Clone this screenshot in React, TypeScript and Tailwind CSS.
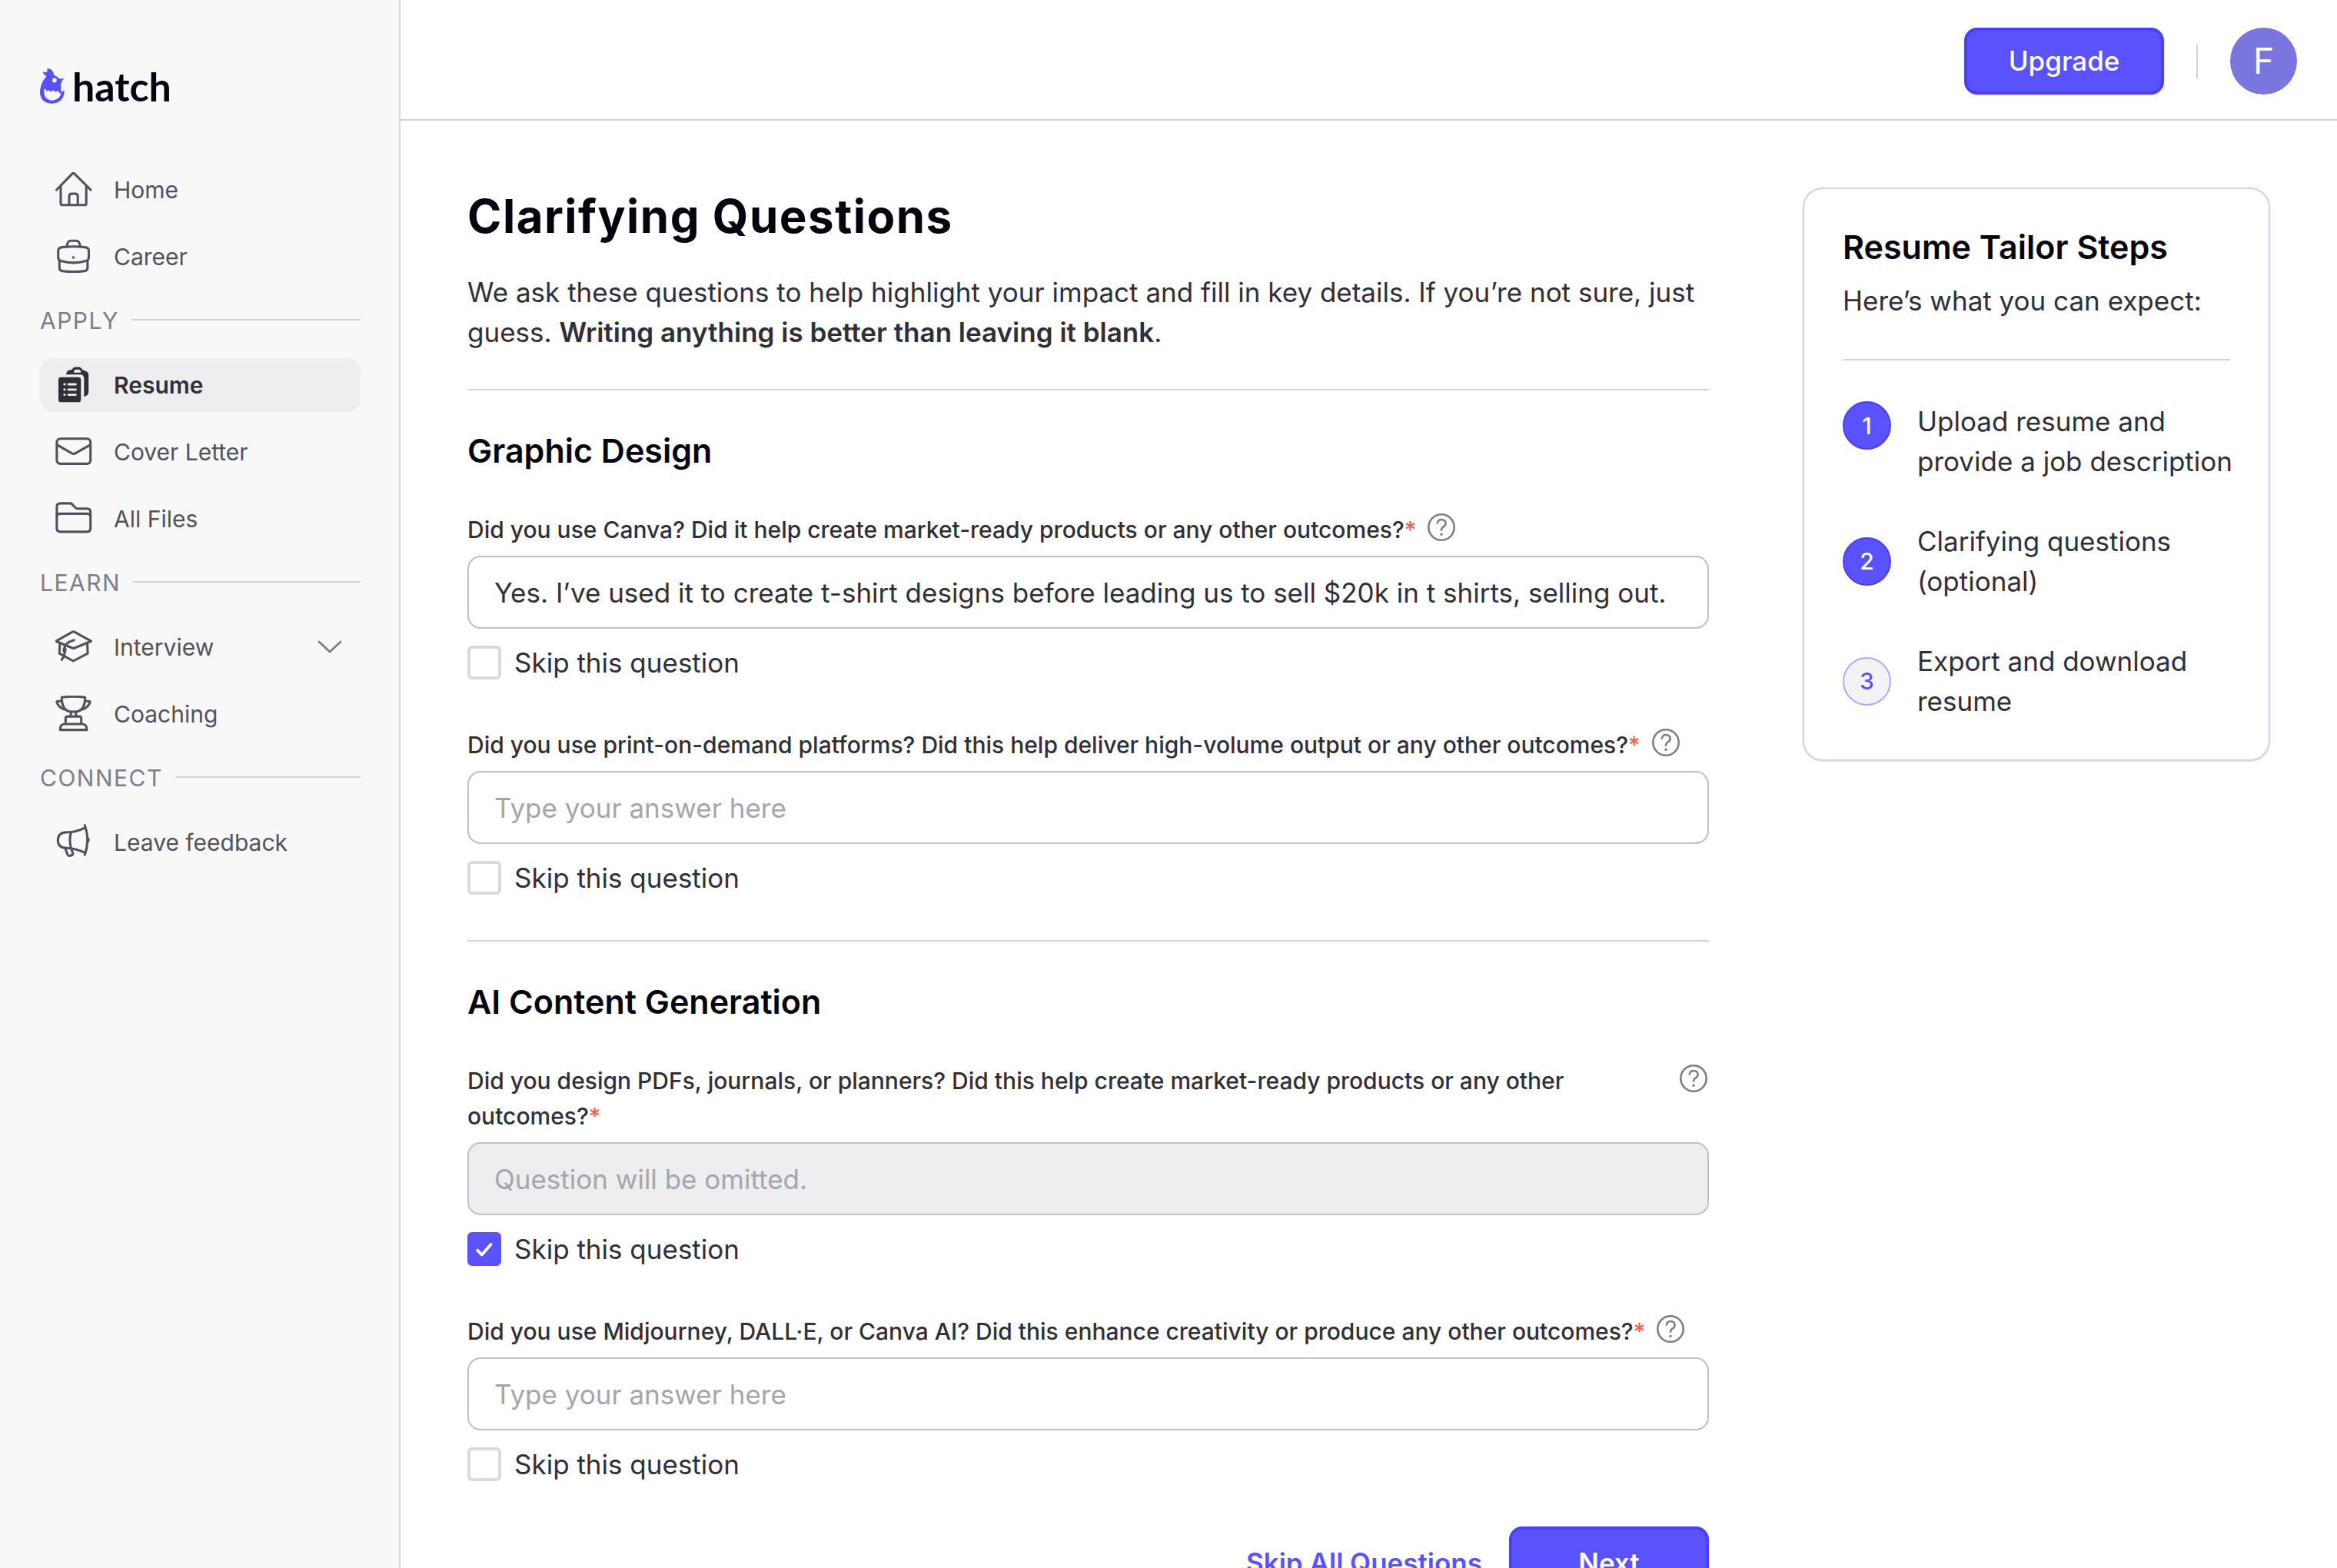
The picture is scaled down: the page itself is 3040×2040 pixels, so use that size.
import { useState, type ReactNode } from "react";

const NEXT_STEPS = [
  { label: "Upload resume and provide a job description", reached: true },
  { label: "Clarifying questions (optional)", reached: true },
  { label: "Export and download resume", reached: false },
];

type Question = {
  id: string;
  text: string;
  answer?: string;
  skipped?: boolean;
};

type Topic = {
  title: string;
  questions: Question[];
};

const TOPICS: Topic[] = [
  {
    title: "Graphic Design",
    questions: [
      {
        id: "canva",
        text: "Did you use Canva? Did it help create market-ready products or any other outcomes?",
        answer:
          "Yes. I’ve used it to create t-shirt designs before leading us to sell $20k in t shirts, selling out.",
      },
      {
        id: "print-on-demand",
        text: "Did you use print-on-demand platforms? Did this help deliver high-volume output or any other outcomes?",
      },
    ],
  },
  {
    title: "AI Content Generation",
    questions: [
      {
        id: "pdfs",
        text: "Did you design PDFs, journals, or planners? Did this help create market-ready products or any other outcomes?",
        skipped: true,
      },
      {
        id: "midjourney",
        text: "Did you use Midjourney, DALL·E, or Canva AI? Did this enhance creativity or produce any other outcomes?",
      },
    ],
  },
];

function Icon({ children }: { children: ReactNode }) {
  return (
    <svg
      viewBox="0 0 48 48"
      fill="none"
      stroke="currentColor"
      strokeWidth="3.1"
      strokeLinecap="round"
      strokeLinejoin="round"
      aria-hidden="true"
      className="h-12 w-12 shrink-0"
    >
      {children}
    </svg>
  );
}

const HomeIcon = () => (
  <Icon>
    <path d="M1.6 24 21.6 3.4q1.8-1.8 3.6 0L46 24" />
    <path d="M7 19v22.4q0 2.3 2.3 2.3h28.6q2.3 0 2.3-2.3V19" />
    <path d="M18 43.500V32.500q0-3.500 3.500-3.500h4.200q3.500 0 3.500 3.500v11" />
  </Icon>
);

const CareerIcon = () => (
  <Icon>
    <path d="M15.300 11V8.500Q16.200 3.200 20 3.200h7.200q3.800 0 4.800 5.300V11" />
    <path d="M8.500 11.600q15-1.700 30.300 0 4.700.6 4.700 5v8.200q0 3.700-3.700 4.700-16.200 4.800-32.400 0-3.700-1-3.700-4.700v-8.200q0-4.400 4.800-5Z" />
    <path d="M5.300 29v9.300q0 3.700 3.900 4.300 14.400 1.900 28.800 0 3.900-.6 3.900-4.300V29" />
    <circle cx="23.500" cy="25" r="1.700" fill="currentColor" stroke="none" />
  </Icon>
);

const ResumeIcon = () => (
  <Icon>
    <rect x="4" y="13.700" width="29.300" height="32.600" rx="3.400" fill="currentColor" stroke="none" />
    <path
      d="M14 10.200q.6-5.500 5.600-6h1.900Q23.200.6 26 .6h4.600q2.800 0 4.500 3.500L39.800 6q3.400 1.400 3.400 5v22q0 3-2.300 4.400l-3.600 1.900V15.500q0-5.300-5.300-5.300Z"
      fill="currentColor"
      stroke="none"
    />
    <path d="M24.300 6.900q.3-2.600 2.300-2.600h4q2 0 2.300 2.600Z" className="fill-[#eeeef0] stroke-[#eeeef0]" strokeWidth="1" />
    <g className="stroke-[#eeeef0]" strokeWidth="2.800">
      <path d="M11.700 23h.6M17 23h9.500M11.700 29.800h.6M17 29.800h9.500M11.700 36.600h.6M17 36.600h9.500" />
    </g>
  </Icon>
);

const MailIcon = () => (
  <Icon>
    <rect x="1.900" y="6.800" width="43.800" height="32.600" rx="4.600" />
    <path d="m2.500 14.800 19.600 11.300q1.600.9 3.200 0L45.200 14.800" />
  </Icon>
);

const FolderIcon = () => (
  <Icon>
    <path d="M1.900 36.300V8.500q0-4.600 4.600-4.600h12.800q1.400 0 2.400 1l4.600 4.900q.9 1 2.300 1h12.500q4.600 0 4.600 4.600v20.900q0 4.600-4.600 4.600H6.500q-4.600 0-4.600-4.600Z" />
    <path d="M1.900 20.500q.6-3.100 4-3.100h35.800q3.400 0 4 3.100" />
  </Icon>
);

const InterviewIcon = () => (
  <Icon>
    <path d="m.9 16.200 21.300-12q1.300-.7 2.600 0l21.700 12-22 9q-1 .4-2 0Z" />
    <path d="M5.800 20.500 5.300 32.200l18 9.800 18.800-9.800-.5-12" />
    <path d="M24.300 14.800Q12 18.500 12 25.500q1.300 9-3.700 14.800" />
    <ellipse cx="12" cy="27.700" rx="2.600" ry="3.600" fill="currentColor" stroke="none" />
  </Icon>
);

const CoachingIcon = () => (
  <Icon>
    <path d="M8.300 2.300q15.200-2 30.400 0 0 17.900-12.300 18.700h-5.800Q8.300 20.200 8.300 2.300Z" />
    <path d="M8.500 7.300H4.300Q1.800 7.300 1.800 8.500q3 8.500 12 9.800M38.500 7.300h4.200q2.500 0 2.500 1.200-3 8.500-12 9.800" />
    <path d="m20.600 21-.8 5.500M26.400 21l.8 5.500M13.300 36.500v-6.800q0-2.600 2.600-2.600h15.200q2.600 0 2.600 2.600v6.800" />
    <path d="M6.300 44.600q-.3-7.600 5.700-7.600h23q6 0 5.800 7.600Z" />
  </Icon>
);

const FeedbackIcon = () => (
  <Icon>
    <path d="M38.700 4.800Q26 11 15 10.700 3.300 11 3.300 21T14 31.300q12 .2 24.700 6.400" />
    <path d="M20.300 11q-2.600 9.500 0 20.500M38.300 1.700q7 19 0 38.500" />
    <path d="M42.500 17.800q3 3 0 6" fill="currentColor" strokeWidth="1.500" />
    <path d="m12.700 31.500 3.200 8.300q.8 2.200 3 1.600l2-.6q2.200-.7 1.700-2.800l-2-6.500" />
  </Icon>
);

function Logo() {
  return (
    <a href="#" aria-label="hatch" className="flex h-12 items-center gap-[10px]">
      <svg viewBox="24 24 95 137" className="h-[46px] w-8 shrink-0" aria-hidden="true">
        <path
          d="M34 36q8 5 18 1-1-8 1-13 17 2 22 14 3 5 2 11 12 4 19 13 6 4 21 1-10 9-12 21v34q3-4 13-9 2 18-9 34-14 17-38 17T33 145Q21 129 25 104q5-30 25-50-12-4-16-18Z"
          fill="#5850ff"
        />
        <circle cx="80" cy="70" r="8.500" className="fill-[#f8f8f8]" />
        <path
          d="M40 103q7 2 10 9l9-3 7 6 9-6 9 6 8-5 9 11q5-1 4 3-8 22-34 24-25-2-30-22-2-11-1-23Z"
          className="fill-[#f8f8f8]"
        />
      </svg>
      <span className="font-[Lato,sans-serif] text-[52px] leading-[52px] font-bold text-[#05050f]">
        hatch
      </span>
    </a>
  );
}

function NavItem({
  icon,
  label,
  active,
  expandable,
}: {
  icon: ReactNode;
  label: string;
  active?: boolean;
  expandable?: boolean;
}) {
  return (
    <a
      href="#"
      aria-current={active ? "page" : undefined}
      className={`flex h-[70px] items-center gap-7 rounded-[17px] pr-6 pl-5 text-[30px] ${
        active
          ? "bg-[#eeeef0] font-semibold text-[#302f38]"
          : "text-[#53525c]"
      }`}
    >
      {icon}
      <span className="flex-1">{label}</span>
      {expandable && (
        <svg viewBox="0 0 32 18" className="h-[18px] w-8" aria-hidden="true">
          <path
            d="m2 2 14 13L30 2"
            fill="none"
            stroke="#7c7b85"
            strokeWidth="2.600"
            strokeLinecap="round"
            strokeLinejoin="round"
          />
        </svg>
      )}
    </a>
  );
}

function NavHeading({ children }: { children: ReactNode }) {
  return (
    <div className="flex h-[63px] items-center gap-4">
      <h2 className="text-[30px] tracking-wider text-[#7f7e88] uppercase">
        {children}
      </h2>
      <div className="mb-1 h-[2px] flex-1 bg-[#d3d2d9]" />
    </div>
  );
}

function Sidebar() {
  return (
    <aside className="w-[521px] shrink-0 border-r-2 border-[#d6d5dd] bg-[#f8f8f8] pt-[88px] pr-[50px] pl-[52px]">
      <Logo />
      <nav className="mt-[76px] flex flex-col gap-[17px]">
        <NavItem icon={<HomeIcon />} label="Home" />
        <NavItem icon={<CareerIcon />} label="Career" />
        <NavHeading>Apply</NavHeading>
        <NavItem icon={<ResumeIcon />} label="Resume" active />
        <NavItem icon={<MailIcon />} label="Cover Letter" />
        <NavItem icon={<FolderIcon />} label="All Files" />
        <NavHeading>Learn</NavHeading>
        <NavItem icon={<InterviewIcon />} label="Interview" expandable />
        <NavItem icon={<CoachingIcon />} label="Coaching" />
        <NavHeading>Connect</NavHeading>
        <NavItem icon={<FeedbackIcon />} label="Leave feedback" />
      </nav>
    </aside>
  );
}

function Header() {
  return (
    <header className="flex h-[157px] shrink-0 items-center justify-end gap-[42px] border-b-2 border-[#d3d2d9] pt-1 pr-[52px]">
      <button
        type="button"
        className="h-[87px] w-[260px] rounded-[17px] border-4 border-[#483fff] bg-[#5a52ff] text-[35px] font-medium text-white shadow-sm"
      >
        Upgrade
      </button>
      <div className="h-11 w-[2px] bg-[#d3d2d9]" />
      <button
        type="button"
        aria-label="Account"
        className="h-[87px] w-[87px] rounded-full bg-[#7b75e0] text-[46px] text-white"
      >
        F
      </button>
    </header>
  );
}

function QuestionField({ question }: { question: Question }) {
  const [answer, setAnswer] = useState(question.answer ?? "");
  const [skipped, setSkipped] = useState(question.skipped ?? false);

  return (
    <div>
      <div className="flex items-start gap-[13px]">
        <label
          htmlFor={question.id}
          className="text-[30px] leading-[46px] font-medium text-[#302f38]"
        >
          {question.text}
          <span className="text-[#ff5c49]">*</span>
        </label>
        <button type="button" aria-label="Help" className="shrink-0">
          <svg viewBox="0 0 40 40" className="h-10 w-10" aria-hidden="true">
            <g fill="none" stroke="#7f7e88" strokeWidth="2.600" strokeLinecap="round">
              <circle cx="20" cy="20" r="16.700" />
              <path d="M14.800 14.600q.7-4.600 5.400-4.600 5.300.2 5.400 5 0 2.600-3 4.500-2.600 1.700-2.600 4.300" />
            </g>
            <circle cx="20" cy="29.200" r="1.700" fill="#7f7e88" />
          </svg>
        </button>
      </div>
      <input
        id={question.id}
        type="text"
        value={skipped ? "" : answer}
        onChange={(e) => setAnswer(e.target.value)}
        disabled={skipped}
        placeholder={
          skipped ? "Question will be omitted." : "Type your answer here"
        }
        className="mt-[11px] block h-[95px] w-full rounded-[17px] border-2 border-[#c1c0c8] bg-white px-[33px] text-[35px] text-[#302f38] outline-none placeholder:text-[#a6a5ad] focus:border-[#5a52ff] disabled:bg-[#eeeef0]"
      />
      <label className="mt-[22px] flex w-fit items-center gap-[17px] text-[35px] leading-[44px] text-[#302f38]">
        <span className="grid">
          <input
            type="checkbox"
            checked={skipped}
            onChange={(e) => setSkipped(e.target.checked)}
            className="col-start-1 row-start-1 h-11 w-11 appearance-none rounded-md border-4 border-[#dad9df] bg-white checked:border-[#5a52ff] checked:bg-[#5a52ff]"
          />
          {skipped && (
            <svg
              viewBox="0 0 44 44"
              className="pointer-events-none col-start-1 row-start-1 h-11 w-11"
              aria-hidden="true"
            >
              <path
                d="m13 23.500 5.800 6L30.500 16"
                fill="none"
                stroke="#fff"
                strokeWidth="3.800"
                strokeLinecap="round"
                strokeLinejoin="round"
              />
            </svg>
          )}
        </span>
        Skip this question
      </label>
    </div>
  );
}

function TopicSection({ topic }: { topic: Topic }) {
  return (
    <section className="border-t-2 border-[#d3d2d9] pt-[52px] pb-[59px]">
      <h2 className="text-[43px] leading-[52px] font-semibold text-[#05050f]">
        {topic.title}
      </h2>
      <div className="mt-[54px] flex flex-col gap-[62px]">
        {topic.questions.map((q) => (
          <QuestionField key={q.id} question={q} />
        ))}
      </div>
    </section>
  );
}

function StepsCard() {
  return (
    <aside className="w-[608px] shrink-0 rounded-[26px] border-2 border-[#d3d2d9] px-[50px] pt-[49px] pb-[50px] shadow-sm">
      <h2 className="text-[43px] leading-[52px] font-semibold text-[#05050f]">
        Resume Tailor Steps
      </h2>
      <p className="mt-[18px] text-[35px] leading-[52px] text-[#302f38]">
        Here’s what you can expect:
      </p>
      <ol className="mt-[50px] flex flex-col gap-[52px] border-t-2 border-[#d3d2d9] pt-[53px]">
        {NEXT_STEPS.map((step, i) => (
          <li
            key={step.label}
            className="-mr-2 flex items-center gap-[34px] text-[35px] leading-[52px] text-[#302f38] first:items-start"
          >
            <span
              className={`flex h-[63px] w-[63px] shrink-0 items-center justify-center rounded-full border-2 text-[30px] font-medium ${
                step.reached
                  ? "border-[#483fff] bg-[#5a52ff] text-white"
                  : "border-[#aeaaff] bg-[#f3f3f5] text-[#5a52ff]"
              }`}
            >
              {i + 1}
            </span>
            {step.label}
          </li>
        ))}
      </ol>
    </aside>
  );
}

export default function App() {
  return (
    <div className="flex h-screen bg-white font-[Inter,sans-serif]">
      <Sidebar />
      <div className="flex min-w-0 flex-1 flex-col">
        <Header />
        <main className="flex flex-1 items-start gap-[122px] overflow-y-auto px-[87px] pt-[87px] [scrollbar-width:none]">
          <form className="min-w-0 flex-1 pb-[87px]">
            <h1 className="text-[60px] leading-[74px] font-bold tracking-wide text-[#05050f]">
              Clarifying Questions
            </h1>
            <p className="mt-9 mb-12 text-[35px] leading-[52px] text-[#302f38]">
              We ask these questions to help highlight your impact and fill in
              key details. If you’re not sure, just guess.{" "}
              <strong className="font-semibold">
                Writing anything is better than leaving it blank
              </strong>
              .
            </p>
            {TOPICS.map((topic) => (
              <TopicSection key={topic.title} topic={topic} />
            ))}
            <div className="flex items-center justify-end gap-[35px]">
              <button
                type="button"
                className="text-[35px] font-semibold text-[#5a52ff]"
              >
                Skip All Questions
              </button>
              <button
                type="button"
                className="h-[95px] w-[260px] rounded-[17px] border-4 border-[#483fff] bg-[#5a52ff] text-[35px] font-semibold text-white shadow-sm"
              >
                Next
              </button>
            </div>
          </form>
          <StepsCard />
        </main>
      </div>
    </div>
  );
}
